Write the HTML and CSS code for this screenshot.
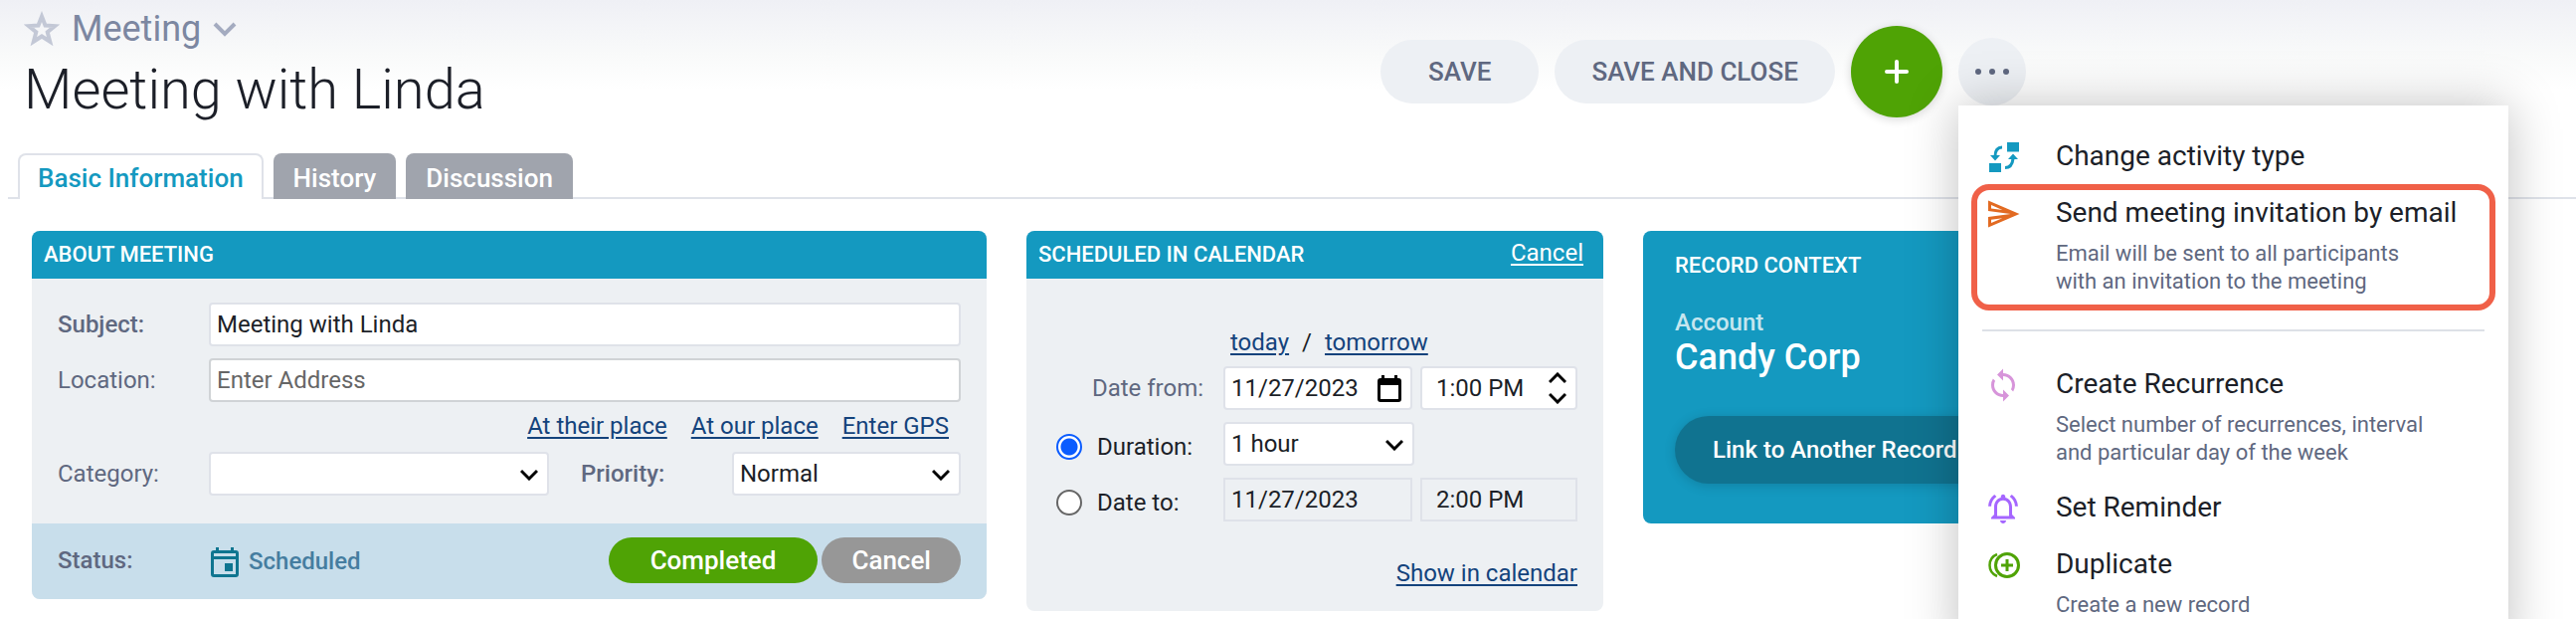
FILE: index.html
```html
<!DOCTYPE html>
<html lang="en">
<head>
<meta charset="utf-8">
<title>Meeting with Linda</title>
<link rel="stylesheet" href="styles.css">
</head>
<body>
<div class="page">
  <header class="header">
    <div class="heading">
      <div class="crumb">
        <svg class="star" viewBox="0 0 36 36" aria-hidden="true"><path d="M18 5.500l3.500 9 9.800.6-7.600 6.200 2.500 9.500L18 25.500l-8.200 5.300 2.500-9.500-7.600-6.200 9.800-.6z" fill="none" stroke="#c3c8d6" stroke-width="4"/></svg>
        <span>Meeting</span>
        <svg class="crumb-arrow" viewBox="0 0 24 16" aria-hidden="true"><path d="M2 3l10 10L22 3" fill="none" stroke="#a4abc0" stroke-width="4"/></svg>
      </div>
      <h1 class="title">Meeting with Linda</h1>
    </div>
    <div class="actions">
      <button class="pill" type="button">SAVE</button>
      <button class="pill pill-tight" type="button">SAVE AND CLOSE</button>
      <button class="add" type="button" aria-label="Add"><svg viewBox="0 0 24 24" width="24" height="24" aria-hidden="true"><path d="M12 2v20M2 12h20" stroke="#fff" stroke-width="4" stroke-linecap="round"/></svg></button>
      <div class="more-wrap">
        <button class="more" type="button" aria-label="More actions"><svg viewBox="0 0 36 8" width="36" height="8" aria-hidden="true"><g fill="#5f6880"><circle cx="4" cy="4" r="3"/><circle cx="18" cy="4" r="3"/><circle cx="32" cy="4" r="3"/></g></svg></button>
        <div class="menu">
          <button class="item" type="button">
            <svg class="icon" viewBox="0 0 36 36" aria-hidden="true"><path fill="#1499c0" d="M22 3h12v9.500H22zM4 24h12v9H4zM5 16h10l-5 5.500zM23 20h10l-5-5.500z"/><path d="M17 8q-7 0-7 9M20 28.500q7 0 8-9" fill="none" stroke="#1499c0" stroke-width="3"/></svg>
            <span class="item-text"><span class="item-title">Change activity type</span></span>
          </button>
          <button class="item item-marked" type="button">
            <svg class="icon" viewBox="0 0 24 24" aria-hidden="true"><path fill="#e26a21" d="M4.010 6.030l7.510 3.220-7.520-1 .010-2.220m7.500 8.720L4 17.970v-2.220l7.510-1M2.010 3L2 10l15 2-15 2 .010 7L23 12 2.010 3z"/></svg>
            <span class="item-text"><span class="item-title">Send meeting invitation by email</span><span class="item-desc">Email will be sent to all participants<br>with an invitation to the meeting</span></span>
          </button>
          <hr class="rule">
          <button class="item" type="button">
            <svg class="icon" viewBox="0 0 24 24" aria-hidden="true"><path fill="#d794da" d="M12 4V1L8 5l4 4V6c3.310 0 6 2.690 6 6 0 1.010-.25 1.970-.7 2.800l1.460 1.460A7.930 7.930 0 0 0 20 12c0-4.420-3.580-8-8-8zm0 14c-3.310 0-6-2.690-6-6 0-1.010.25-1.970.7-2.800L5.240 7.740A7.930 7.930 0 0 0 4 12c0 4.420 3.580 8 8 8v3l4-4-4-4v3z"/></svg>
            <span class="item-text"><span class="item-title">Create Recurrence</span><span class="item-desc">Select number of recurrences, interval<br>and particular day of the week</span></span>
          </button>
          <button class="item" type="button">
            <svg class="icon" viewBox="0 0 24 24" aria-hidden="true"><path fill="#a566ff" d="M12 22c1.100 0 2-.9 2-2h-4c0 1.100.9 2 2 2zm6-6v-5c0-3.070-1.630-5.640-4.500-6.320V4c0-.83-.67-1.500-1.500-1.500s-1.500.67-1.500 1.500v.68C7.640 5.360 6 7.920 6 11v5l-2 2v1h16v-1l-2-2zm-2 1H8v-6c0-2.480 1.510-4.500 4-4.500s4 2.020 4 4.500v6zM7.580 4.080L6.150 2.650C3.750 4.480 2.170 7.300 2.030 10.500h2a8.445 8.445 0 0 1 3.550-6.420zm12.390 6.420h2c-.15-3.200-1.730-6.020-4.120-7.850l-1.420 1.430a8.495 8.495 0 0 1 3.540 6.420z"/></svg>
            <span class="item-text"><span class="item-title">Set Reminder</span></span>
          </button>
          <button class="item" type="button">
            <svg class="icon" viewBox="0 0 36 36" aria-hidden="true"><g fill="none" stroke="#4fa305"><circle cx="22" cy="18" r="11.500" stroke-width="3"/><path d="M22 12v12M16 18h12" stroke-width="3"/><path d="M12 7Q4.500 10 4.500 18t7.500 11" stroke-width="2.500"/></g></svg>
            <span class="item-text"><span class="item-title">Duplicate</span><span class="item-desc">Create a new record</span></span>
          </button>
        </div>
      </div>
    </div>
  </header>

  <nav class="tabs">
    <a class="tab tab-active" href="#basic">Basic Information</a>
    <a class="tab" href="#history">History</a>
    <a class="tab" href="#discussion">Discussion</a>
  </nav>

  <main class="panels">
    <section class="panel">
      <div class="panel-head"><h2 class="panel-title">ABOUT MEETING</h2></div>
      <div class="about">
        <div class="row">
          <label class="label strong" for="subject">Subject:</label>
          <input class="field" id="subject" type="text" value="Meeting with Linda">
        </div>
        <div class="row">
          <label class="label" for="location">Location:</label>
          <input class="field field-location" id="location" type="text" placeholder="Enter Address">
        </div>
        <div class="places">
          <a class="link" href="#their">At their place</a>
          <a class="link" href="#our">At our place</a>
          <a class="link" href="#gps">Enter GPS</a>
        </div>
        <div class="row row-split">
          <label class="label" for="category">Category:</label>
          <div class="select-box">
            <select class="field" id="category"><option></option></select>
            <svg class="arrow" viewBox="0 0 18 12" aria-hidden="true"><path d="M1 2l8 8 8-8" fill="none" stroke="#000" stroke-width="3"/></svg>
          </div>
          <label class="label label-second strong" for="priority">Priority:</label>
          <div class="select-box">
            <select class="field" id="priority"><option>Normal</option></select>
            <svg class="arrow" viewBox="0 0 18 12" aria-hidden="true"><path d="M1 2l8 8 8-8" fill="none" stroke="#000" stroke-width="3"/></svg>
          </div>
        </div>
      </div>
      <div class="status">
        <span class="label strong">Status:</span>
        <span class="state">
          <svg viewBox="0 0 28 30" width="28" height="30" aria-hidden="true"><path fill="#0f7590" fill-rule="evenodd" d="M5 0h3v3h12V0h3v3h2a3 3 0 0 1 3 3v21a3 3 0 0 1-3 3H3a3 3 0 0 1-3-3V6a3 3 0 0 1 3-3h2zM3 6v3h22V6zm0 6v15h22V12zm11 4h8v8h-8z"/></svg>
          Scheduled
        </span>
        <button class="chip chip-done" type="button">Completed</button>
        <button class="chip" type="button">Cancel</button>
      </div>
    </section>

    <section class="panel">
      <div class="panel-head">
        <h2 class="panel-title">SCHEDULED IN CALENDAR</h2>
        <a class="head-link" href="#cancel">Cancel</a>
      </div>
      <div class="schedule">
        <div class="days"><a class="link" href="#today">today</a><span>/</span><a class="link" href="#tomorrow">tomorrow</a></div>
        <label class="label label-from" for="date-from">Date from:</label>
        <div class="select-box">
          <input class="field" id="date-from" type="text" value="11/27/2023">
          <svg class="calendar" viewBox="0 0 24 28" aria-hidden="true"><path fill-rule="evenodd" d="M4 0h3v3h10V0h3v3h1a3 3 0 0 1 3 3v18a3 3 0 0 1-3 3H3a3 3 0 0 1-3-3V6a3 3 0 0 1 3-3h1zM3 10v14h18V10z"/></svg>
        </div>
        <div class="select-box">
          <input class="field field-time" type="text" value="1:00 PM" aria-label="Time from">
          <svg class="spinner" viewBox="0 0 18 32" aria-hidden="true"><path d="M1 10l8-8 8 8M1 22l8 8 8-8" fill="none" stroke="#000" stroke-width="3"/></svg>
        </div>
        <label class="choice"><input class="radio" type="radio" name="end" checked>Duration:</label>
        <div class="select-box duration">
          <select class="field" aria-label="Duration"><option>1 hour</option></select>
          <svg class="arrow" viewBox="0 0 18 12" aria-hidden="true"><path d="M1 2l8 8 8-8" fill="none" stroke="#000" stroke-width="3"/></svg>
        </div>
        <label class="choice"><input class="radio" type="radio" name="end">Date to:</label>
        <input class="field field-off" type="text" value="11/27/2023" aria-label="Date to" readonly>
        <input class="field field-off field-time" type="text" value="2:00 PM" aria-label="Time to" readonly>
        <a class="link show" href="#calendar">Show in calendar</a>
      </div>
    </section>

    <section class="panel context">
      <h2 class="panel-title">RECORD CONTEXT</h2>
      <div class="kind">Account</div>
      <div class="name">Candy Corp</div>
      <button class="relink" type="button">Link to Another Record</button>
    </section>
  </main>
</div>
</body>
</html>
```

FILE: styles.css
```css
* { box-sizing: border-box; }

body {
  margin: 0;
  background: #fff;
  color: #1c1f28;
  font: 400 24px/28px Roboto, "Liberation Sans", sans-serif;
}

button, input, select { font: inherit; color: inherit; }
button { border: 0; cursor: pointer; }
h1, h2 { margin: 0; }

.page {
  min-height: 100vh;
  overflow: hidden;
  background: linear-gradient(#eff0f5, #f9fafa 56px, #fff 90px);
}

/* Header */
.header {
  display: grid;
  grid-template-columns: 1388fr 1202fr;
  align-items: start;
}
.heading { padding: 8px 0 0 24px; }
.crumb {
  display: flex;
  align-items: center;
  gap: 12px;
  color: #7c87a1;
  font-size: 36px;
  line-height: 42px;
}
.star { width: 36px; height: 36px; }
.crumb-arrow { width: 24px; height: 16px; }
.title {
  margin-top: 7px;
  font-size: 56px;
  font-weight: 300;
  line-height: 66px;
}
.actions {
  display: flex;
  align-items: center;
  gap: 16px;
  padding-top: 26px;
}
.pill {
  height: 64px;
  padding: 0 48px;
  border-radius: 32px;
  background: #edf0f4;
  color: #5f6880;
  font-size: 26px;
  font-weight: 500;
}
.pill-tight { padding: 0 37px; }
.add {
  display: grid;
  place-items: center;
  width: 92px;
  height: 92px;
  border-radius: 50%;
  background: #4fa305;
  box-shadow: 0 2px 10px rgba(0, 0, 0, .16);
}
.more-wrap { position: relative; }
.more {
  display: grid;
  place-items: center;
  width: 68px;
  height: 68px;
  border-radius: 50%;
  background: #edf0f4;
}

/* Actions menu */
.menu {
  position: absolute;
  z-index: 2;
  top: 100%;
  left: 0;
  width: 553px;
  padding: 22px 0;
  background: #fff;
  box-shadow: 0 0 48px rgba(0, 0, 0, .25);
}
.item {
  position: relative;
  display: flex;
  align-items: flex-start;
  gap: 35px;
  width: 100%;
  padding: 12px 24px 12px 27px;
  background: none;
  text-align: left;
}
.icon { flex: none; width: 36px; height: 36px; margin-bottom: -3px; }
.item-text { display: grid; gap: 11px; }
.item-title { font-size: 28px; line-height: 33px; }
.item-desc { color: #5f6880; font-size: 22px; line-height: 28px; }
.item-marked::after {
  content: "";
  position: absolute;
  inset: 0 13px -3px;
  border: 6px solid #f06048;
  border-radius: 18px;
}
.rule {
  height: 2px;
  margin: 22px 24px 24px;
  border: 0;
  background: #dde1e7;
}

/* Tabs */
.tabs {
  display: flex;
  gap: 10px;
  margin: 31px 0 0 8px;
  padding-left: 10px;
  box-shadow: inset 0 -2px #dfe2e9;
}
.tab {
  height: 46px;
  padding: 0 20px;
  border-radius: 8px 8px 0 0;
  background: #a0a4ad;
  color: #fff;
  font-size: 26px;
  font-weight: 500;
  line-height: 50px;
  text-decoration: none;
}
.tab-active {
  padding: 0 18px;
  border: 2px solid #dfe2e9;
  border-bottom: 0;
  background: #fff;
  color: #1499c0;
  line-height: 46px;
}

/* Panels */
.panels {
  display: grid;
  grid-template-columns: 960fr 580fr 400fr 466fr;
  align-items: start;
  gap: 40px;
  padding: 32px 32px 0;
}
.panel {
  overflow: hidden;
  border-radius: 8px;
  background: #edf0f3;
}
.panel-head {
  display: flex;
  align-items: center;
  justify-content: space-between;
  height: 48px;
  padding: 0 20px 0 12px;
  background: #1499c0;
}
.panel-title {
  color: #fff;
  font-size: 22px;
  font-weight: 500;
  line-height: 26px;
}
.head-link {
  padding-bottom: 4px;
  color: #fff;
  text-underline-offset: 3px;
}
.link { color: #14437c; text-underline-offset: 3px; }
.label { color: #5f6880; }
.strong { font-weight: 500; }

.field {
  width: 100%;
  height: 44px;
  padding: 0 6px;
  border: 2px solid #dfe2e9;
  border-radius: 4px;
  outline: 0;
  background: #fff;
  appearance: none;
}
.field::placeholder { color: #666; opacity: 1; }
.field-location { border-color: #d0d3d6; }
.field-time { padding-left: 14px; }
.field-off { border-radius: 0; background: transparent; }

.select-box { position: relative; }
.arrow, .calendar, .spinner { position: absolute; pointer-events: none; }
.arrow { top: 17px; right: 11px; width: 18px; height: 12px; }
.calendar { top: 9px; right: 11px; width: 24px; height: 28px; }
.spinner { top: 6px; right: 11px; width: 18px; height: 32px; }

/* About meeting */
.about { display: grid; gap: 12px; padding: 24px 26px 28px; }
.row {
  display: grid;
  grid-template-columns: 152px 1fr;
  align-items: center;
}
.row-split { grid-template-columns: 152px 342fr 184px 230fr; }
.label-second { padding-left: 32px; }
.places {
  display: flex;
  justify-content: flex-end;
  gap: 24px;
  margin-top: -2px;
  padding-right: 12px;
}
.status {
  display: flex;
  align-items: center;
  gap: 4px;
  padding: 14px 26px 16px;
  background: #c8deeb;
}
.status .label { width: 150px; }
.state {
  display: flex;
  gap: 10px;
  flex: 1;
  padding-top: 4px;
  color: #457da0;
  font-weight: 500;
}
.chip {
  height: 46px;
  padding: 0 30px;
  border-radius: 23px;
  background: #979797;
  color: #fff;
  font-size: 26px;
  font-weight: 500;
}
.chip-done { padding: 0 42px; background: #4fa305; }

/* Schedule */
.schedule {
  display: grid;
  grid-template-columns: 160px 190fr 158fr;
  align-items: center;
  gap: 12px 8px;
  padding: 50px 26px 24px 30px;
}
.days {
  display: flex;
  gap: 13px;
  grid-column: 2 / 4;
  margin-bottom: -2px;
  padding-left: 7px;
}
.label-from { padding-right: 12px; text-align: right; }
.choice { display: flex; align-items: center; gap: 15px; padding-top: 6px; }
.radio {
  width: 26px;
  height: 26px;
  margin: 0;
  border: 2px solid #666;
  border-radius: 50%;
  background: #fff;
  appearance: none;
}
.radio:checked {
  border-color: #0b5cff;
  background: radial-gradient(#0b5cff 8px, #fff 9px);
}
.duration { grid-column: 2 / 4; width: 192px; }
.show { grid-column: 1 / 4; justify-self: end; margin-top: 26px; }

/* Record context */
.context { padding: 22px 32px 40px; background: #1499c0; color: #fff; }
.kind { margin-top: 30px; color: #c6e6ef; font-weight: 500; }
.name { font-size: 36px; font-weight: 500; line-height: 42px; }
.relink {
  height: 68px;
  margin-top: 38px;
  padding: 0 38px;
  border-radius: 34px;
  background: #107390;
  box-shadow: 0 2px 12px rgba(0, 0, 0, .16);
  font-weight: 500;
  white-space: nowrap;
}
```
